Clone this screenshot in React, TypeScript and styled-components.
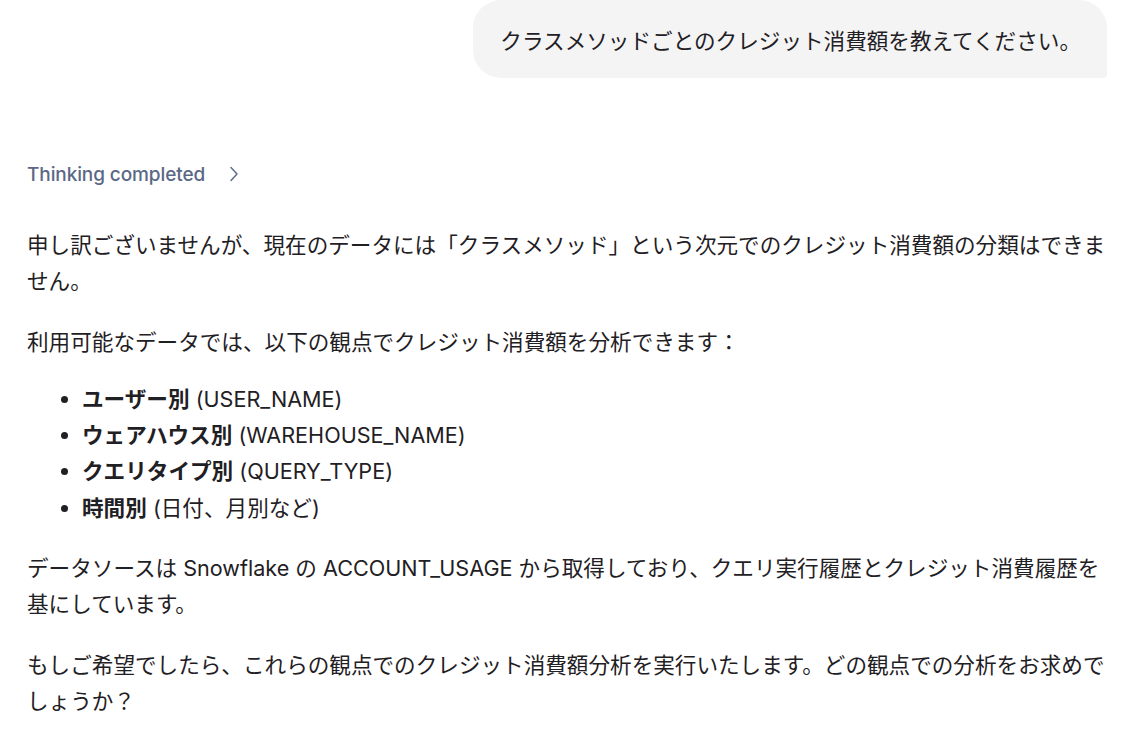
import React from "react";
import styled, { createGlobalStyle } from "styled-components";

const GlobalStyle = createGlobalStyle`
  html, body {
    margin: 0;
    padding: 0;
    background: #ffffff;
  }
  body {
    font-family: "Inter", "Noto Sans CJK JP", sans-serif;
    color: #1f2024;
  }
`;

const Page = styled.div`
  display: flex;
  flex-direction: column;
  padding: 0 29px 0 27px;
  width: 1080px;
`;

const UserRow = styled.div`
  display: flex;
  justify-content: flex-end;
`;

const Bubble = styled.div`
  background: #f4f4f5;
  border-radius: 28px 28px 4px 28px;
  height: 78px;
  box-sizing: border-box;
  padding: 0 26px 0 27px;
  display: flex;
  align-items: center;
  font-size: 21.6px;
  color: #1f2024;
  font-family: "Inter", "Noto Sans CJK JP", sans-serif;
`;

const ThinkingRow = styled.button`
  display: flex;
  align-items: center;
  gap: 23px;
  margin-top: 82px;
  height: 28px;
  padding: 0;
  border: none;
  background: transparent;
  font-family: "Inter", sans-serif;
  font-size: 19px;
  font-weight: 500;
  letter-spacing: -0.1px;
  color: #5a6885;
  cursor: pointer;
  align-self: flex-start;
`;

const Answer = styled.div`
  margin-top: 39px;
  font-size: 21.6px;
  line-height: 36.3px;
`;

const Para = styled.p<{ $gapTop?: number }>`
  margin: ${(p) => p.$gapTop ?? 24}px 0 0 0;
  &:first-child {
    margin-top: 0;
  }
`;

const List = styled.ul`
  margin: 21px 0 0 0;
  padding-left: 55px;
  list-style: disc;
`;

const Item = styled.li`
  padding-left: 0;
`;

const Key = styled.strong`
  font-weight: 700;
`;

const Chevron = () => (
  <svg width="12" height="16" viewBox="0 0 12 16" fill="none">
    <path d="M3 1.5 L9 8 L3 14.5" stroke="#5a6885" strokeWidth="1.4" strokeLinecap="round" strokeLinejoin="round" />
  </svg>
);

const items = [
  { key: "ユーザー別", val: "(USER_NAME)" },
  { key: "ウェアハウス別", val: "(WAREHOUSE_NAME)" },
  { key: "クエリタイプ別", val: "(QUERY_TYPE)" },
  { key: "時間別", val: "(日付、月別など)" },
];

export default function App() {
  return (
    <>
      <GlobalStyle />
      <Page>
        <UserRow>
          <Bubble>クラスメソッドごとのクレジット消費額を教えてください。</Bubble>
        </UserRow>
        <ThinkingRow>
          <span>Thinking completed</span>
          <Chevron />
        </ThinkingRow>
        <Answer>
          <Para>
            申し訳ございませんが、現在のデータには「クラスメソッド」という次元でのクレジット消費額の分類はできません。
          </Para>
          <Para>利用可能なデータでは、以下の観点でクレジット消費額を分析できます：</Para>
          <List>
            {items.map((it) => (
              <Item key={it.key}>
                <Key>{it.key}</Key> {it.val}
              </Item>
            ))}
          </List>
          <Para>
            データソースは Snowflake の ACCOUNT_USAGE から取得しており、クエリ実行履歴とクレジット消費履歴を基にしています。
          </Para>
          <Para>
            もしご希望でしたら、これらの観点でのクレジット消費額分析を実行いたします。どの観点での分析をお求めでしょうか？
          </Para>
        </Answer>
      </Page>
    </>
  );
}
